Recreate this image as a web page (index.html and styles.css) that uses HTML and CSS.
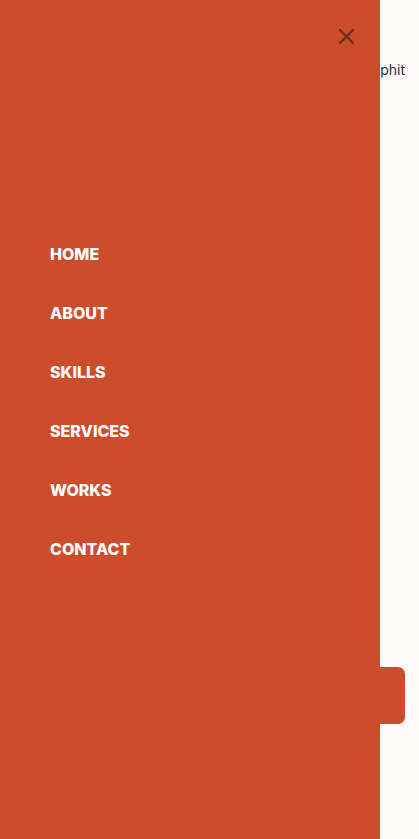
FILE: index.html
```html
<!DOCTYPE html>
<html lang="fr">
<head>
<meta charset="utf-8">
<title>Menu</title>
<link rel="stylesheet" href="styles.css">
</head>
<body>
<main class="page">
  <p class="intro">Portfolio de designer graphit</p>
  <a class="cta" href="#">Contact</a>
</main>
<aside class="drawer">
  <button class="close" aria-label="Fermer">
    <svg width="15" height="15" viewBox="0 0 15 15"><path d="M1 1L14 14M14 1L1 14" stroke="#6a2a1c" stroke-width="2.2" stroke-linecap="square" fill="none"/></svg>
  </button>
  <nav class="menu">
    <a href="#">HOME</a>
    <a href="#">ABOUT</a>
    <a href="#">SKILLS</a>
    <a href="#">SERVICES</a>
    <a href="#">WORKS</a>
    <a href="#">CONTACT</a>
  </nav>
</aside>
</body>
</html>
```
FILE: styles.css
```css
* { box-sizing: border-box; }
html, body { margin: 0; padding: 0; }
body {
  background: #fffaf8;
  font-family: "Inter", "Open Sans", sans-serif;
  min-height: 100vh;
  overflow: hidden;
}
.page {
  display: flex;
  flex-direction: column;
  align-items: flex-end;
  padding: 60px 14px 0 0;
}
.intro {
  margin: 0;
  font-size: 14px;
  line-height: 20px;
  color: #2b2d3a;
  white-space: nowrap;
}
.cta {
  margin-top: 587px;
  width: 160px;
  height: 57px;
  border-radius: 7px;
  background: #cd4c2c;
  color: #fff;
  text-decoration: none;
}
.drawer {
  position: fixed;
  top: 0;
  left: 0;
  width: 380px;
  height: 100vh;
  background: #cd4c2c;
  display: flex;
  flex-direction: column;
  padding: 29px 26px 0 50px;
}
.close {
  align-self: flex-end;
  border: 0;
  padding: 0;
  background: none;
  width: 15px;
  height: 15px;
  display: block;
  cursor: pointer;
}
.close svg { display: block; }
.menu {
  display: flex;
  flex-direction: column;
  gap: 35px;
  margin-top: 198px;
}
.menu a {
  color: #fff;
  text-decoration: none;
  font-weight: 800;
  font-size: 16px;
  line-height: 24px;
  letter-spacing: 0;
}
```
